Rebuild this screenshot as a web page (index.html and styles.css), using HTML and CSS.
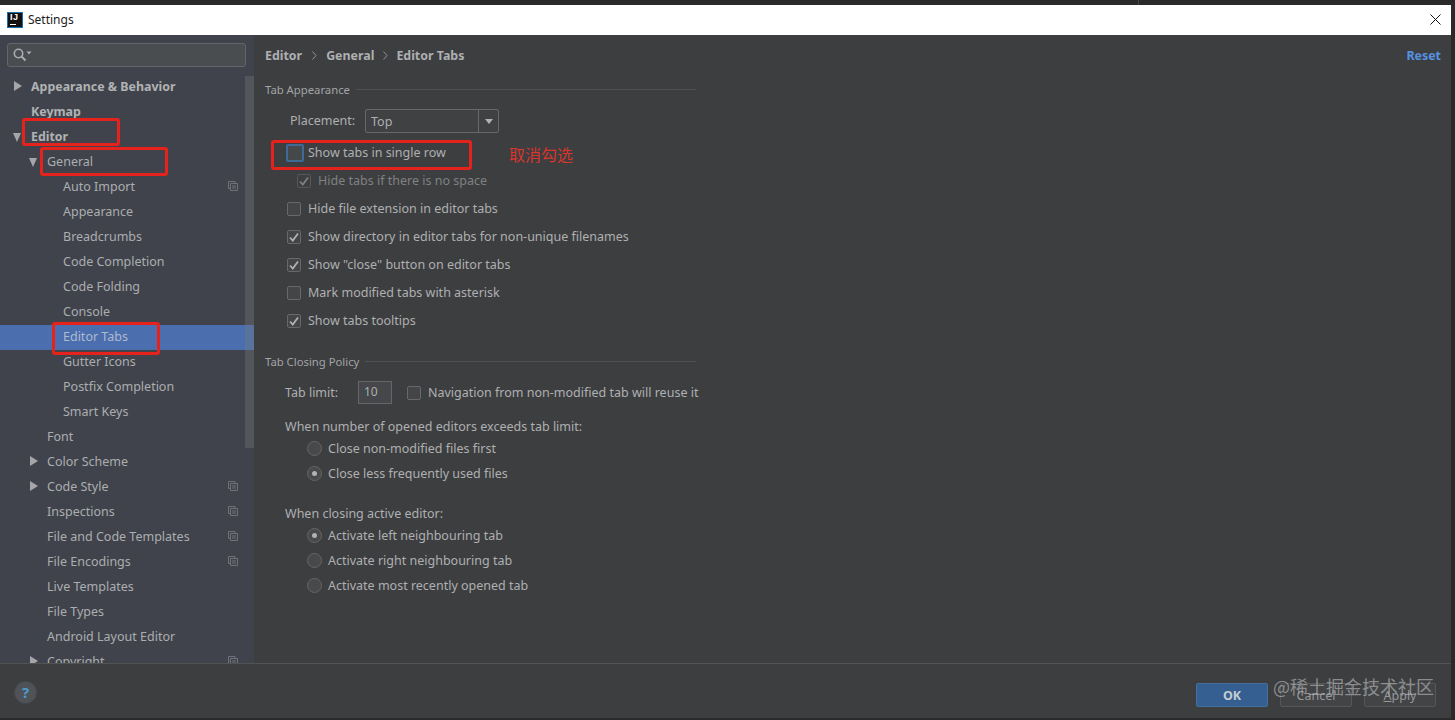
FILE: index.html
```html
<!DOCTYPE html>
<html lang="en">
<head>
<meta charset="utf-8">
<title>Settings</title>
<link rel="stylesheet" href="styles.css">
</head>
<body>
<svg class="defs" width="0" height="0" aria-hidden="true">
  <symbol id="copy" viewBox="0 0 10 10"><path d="M0.5 0.5H7V2.5M0.5 0.5V7.5H2.5M2.5 2.5H9.5V9.5H2.5ZM4 5H8M4 7H8" fill="none" stroke="#6f7378" stroke-width="1"/></symbol>
  <symbol id="check" viewBox="0 0 14 14"><path d="M3 7.5L5.8 10.5L11 3.5" fill="none" stroke="currentColor" stroke-width="1.8"/></symbol>
  <symbol id="chev" viewBox="0 0 5 9"><path d="M0.5 0.5L4 4.5L0.5 8.5" fill="none" stroke="#8f9193" stroke-width="1"/></symbol>
</svg>
<i class="top-line"></i>
<div class="window">
  <header class="titlebar">
    <div class="logo"><span class="logo-text">IJ</span><span class="logo-bar"></span></div>
    <span class="title">Settings</span>
    <svg class="close" width="11" height="11" viewBox="0 0 11 11"><path d="M0.5 0.5L10.5 10.5M10.5 0.5L0.5 10.5" stroke="#111" stroke-width="1" fill="none"/></svg>
  </header>
  <div class="main">
    <aside class="sidebar">
      <div class="search">
        <svg width="20" height="14" viewBox="0 0 20 14"><circle cx="5.5" cy="5.5" r="4.2" fill="none" stroke="#a9adb2" stroke-width="1.6"/><path d="M8.5 8.5L12.5 12.5" stroke="#a9adb2" stroke-width="2"/><path d="M13.5 3.5H18.5L16 6.5Z" fill="#a9adb2"/></svg>
      </div>
      <div class="tree">
        <div class="node lvl0 strong"><span class="arrow right"></span>Appearance &amp; Behavior</div>
        <div class="node lvl0 strong">Keymap</div>
        <div class="node lvl0 strong"><span class="arrow down"></span>Editor</div>
        <div class="node lvl1"><span class="arrow down"></span>General</div>
        <div class="node lvl2">Auto Import<svg class="copy"><use href="#copy"/></svg></div>
        <div class="node lvl2">Appearance</div>
        <div class="node lvl2">Breadcrumbs</div>
        <div class="node lvl2">Code Completion</div>
        <div class="node lvl2">Code Folding</div>
        <div class="node lvl2">Console</div>
        <div class="node lvl2 selected">Editor Tabs</div>
        <div class="node lvl2">Gutter Icons</div>
        <div class="node lvl2">Postfix Completion</div>
        <div class="node lvl2">Smart Keys</div>
        <div class="node lvl1">Font</div>
        <div class="node lvl1"><span class="arrow right"></span>Color Scheme</div>
        <div class="node lvl1"><span class="arrow right"></span>Code Style<svg class="copy"><use href="#copy"/></svg></div>
        <div class="node lvl1">Inspections<svg class="copy"><use href="#copy"/></svg></div>
        <div class="node lvl1">File and Code Templates<svg class="copy"><use href="#copy"/></svg></div>
        <div class="node lvl1">File Encodings<svg class="copy"><use href="#copy"/></svg></div>
        <div class="node lvl1">Live Templates</div>
        <div class="node lvl1">File Types</div>
        <div class="node lvl1">Android Layout Editor</div>
        <div class="node lvl1"><span class="arrow right"></span>Copyright<svg class="copy"><use href="#copy"/></svg></div>
      </div>
      <div class="scrollbar"></div>
    </aside>
    <main class="content">
      <div class="crumbs">
        <span>Editor</span><svg class="sep"><use href="#chev"/></svg><span>General</span><svg class="sep sep-two"><use href="#chev"/></svg><span>Editor Tabs</span>
        <a class="reset">Reset</a>
      </div>
      <div class="section first"><span>Tab Appearance</span><i class="rule"></i></div>
      <div class="row placement">
        <span class="placement-label">Placement:</span>
        <div class="combo"><span class="combo-value">Top</span><span class="combo-btn"><i></i></span></div>
      </div>
      <div class="row check first-check"><span class="box focus"></span>Show tabs in single row</div>
      <div class="row check sub muted"><span class="box on dim"><svg width="14" height="14"><use href="#check"/></svg></span>Hide tabs if there is no space</div>
      <div class="row check"><span class="box"></span>Hide file extension in editor tabs</div>
      <div class="row check"><span class="box on"><svg width="14" height="14"><use href="#check"/></svg></span>Show directory in editor tabs for non-unique filenames</div>
      <div class="row check"><span class="box on"><svg width="14" height="14"><use href="#check"/></svg></span>Show "close" button on editor tabs</div>
      <div class="row check"><span class="box"></span>Mark modified tabs with asterisk</div>
      <div class="row check"><span class="box on"><svg width="14" height="14"><use href="#check"/></svg></span>Show tabs tooltips</div>
      <div class="section second"><span>Tab Closing Policy</span><i class="rule"></i></div>
      <div class="row limit">
        <span class="limit-label">Tab limit:</span>
        <span class="field">10</span>
        <span class="box"></span>
        <span class="limit-text">Navigation from non-modified tab will reuse it</span>
      </div>
      <div class="row label one">When number of opened editors exceeds tab limit:</div>
      <div class="row radio"><span class="dot"></span>Close non-modified files first</div>
      <div class="row radio"><span class="dot on"></span>Close less frequently used files</div>
      <div class="row label two">When closing active editor:</div>
      <div class="row radio"><span class="dot on"></span>Activate left neighbouring tab</div>
      <div class="row radio"><span class="dot"></span>Activate right neighbouring tab</div>
      <div class="row radio"><span class="dot"></span>Activate most recently opened tab</div>
    </main>
  </div>
  <footer class="footer">
    <span class="help">?</span>
    <div class="buttons">
      <button class="btn primary">OK</button>
      <button class="btn">Cancel</button>
      <button class="btn"><u>A</u>pply</button>
    </div>
  </footer>
</div>
<div class="mark m-editor"></div>
<div class="mark m-general"></div>
<div class="mark m-tabs"></div>
<div class="mark m-show"></div>
<div class="note">取消勾选</div>
<div class="watermark">@稀土掘金技术社区</div>
</body>
</html>
```

FILE: styles.css
```css
* { box-sizing: border-box; }
html, body { margin: 0; height: 720px; overflow: hidden; }
body {
  position: relative;
  background: #2a2a2a;
  padding-top: 5px;
  font-family: "Noto Sans", "Liberation Sans", sans-serif;
  font-size: 12.5px;
  color: #aeb0b1;
}
.defs { position: absolute; }
.top-line { position: absolute; left: 1138px; top: 0; width: 1px; height: 5px; background: #444; }
.window { width: 1451px; height: 713px; display: flex; flex-direction: column; background: #3d3e40; }

.titlebar { height: 30px; flex: none; background: #fff; display: flex; align-items: center; padding: 0 10px 1px 7px; color: #222; }
.logo { width: 16px; height: 16px; margin-top: 1px; background: #111; border: 1px solid #1f6fa8; position: relative; flex: none; margin-right: 5px; }
.logo-text { position: absolute; left: 2px; top: -2px; font: bold 9px/12px "Liberation Sans", sans-serif; letter-spacing: .5px; color: #fff; }
.logo-bar { position: absolute; left: 2px; bottom: 2px; width: 6px; height: 1px; background: #fff; }
.title { font-size: 12px; flex: 1; }
.close { flex: none; }

.main { flex: 1; display: flex; min-height: 0; }
.sidebar { width: 254px; flex: none; background: #40434b; position: relative; overflow: hidden; padding-top: 8px; }
.search { width: 239px; height: 24px; margin-left: 7px; background: #4a4d50; border: 1px solid #63666a; border-radius: 3px; display: flex; align-items: center; padding-left: 5px; }
.tree { margin-top: 8px; }
.node { height: 25px; line-height: 23px; position: relative; white-space: nowrap; color: #abaeb0; }
.lvl0 { padding-left: 31px; }
.lvl1 { padding-left: 47px; }
.lvl2 { padding-left: 63px; }
.strong { font-weight: 700; font-size: 12.4px; color: #b0b2b4; }
.selected { background: #4b6eaf; color: #aebace; }
.arrow { position: absolute; top: 6px; width: 0; height: 0; }
.arrow.right { border-left: 8px solid #a4a6a9; border-top: 5px solid transparent; border-bottom: 5px solid transparent; }
.arrow.down { top: 8px; border-top: 9px solid #a4a6a9; border-left: 4.5px solid transparent; border-right: 4.5px solid transparent; }
.lvl0 .arrow { left: 14px; }
.lvl0 .arrow.down { left: 13px; }
.lvl1 .arrow { left: 30px; }
.lvl1 .arrow.down { left: 29px; }
.copy { position: absolute; left: 228px; top: 6px; width: 10px; height: 10px; }
.scrollbar { position: absolute; left: 245px; top: 41px; width: 9px; height: 372px; background: rgba(120,122,125,.35); }

.content { flex: 1; padding-left: 11px; min-width: 0; }
.crumbs { height: 40px; display: flex; align-items: center; font-weight: 700; font-size: 12.4px; color: #aeb0b2; padding-right: 10px; }
.sep { width: 5px; height: 9px; margin: 1px 9px 0 10px; flex: none; }
.sep-two { margin-right: 8px; margin-left: 9px; }
.reset { margin-left: auto; color: #5592e0; }

.section { width: 431px; height: 20px; padding-bottom: 2px; display: flex; align-items: center; gap: 6px; font-size: 11.3px; color: #a2a4a6; }
.section.first { margin-top: 5px; }
.section.second { margin-top: 17px; }
.rule { flex: 1; height: 1px; background: #4f5153; }

.row { display: flex; align-items: center; white-space: nowrap; }
.placement { height: 24px; margin-top: 9px; padding-left: 25px; }
.placement-label { width: 75px; padding-bottom: 2px; }
.combo { width: 134px; height: 24px; border: 1px solid #66686a; border-radius: 2px; display: flex; background: #3f4143; }
.combo-value { flex: 1; padding-left: 5px; line-height: 24px; }
.combo-btn { width: 20px; border-left: 1px solid #66686a; display: flex; align-items: center; justify-content: center; }
.combo-btn i { width: 0; height: 0; border-top: 5px solid #b0b2b3; border-left: 4px solid transparent; border-right: 4px solid transparent; }

.check { height: 28px; padding: 0 0 1px 22px; gap: 7px; }
.first-check { margin-top: 6px; }
.sub { padding-left: 32px; gap: 7px; }
.muted { color: #7f8183; }
.box { width: 14px; height: 14px; flex: none; border: 1px solid #66686a; border-radius: 2px; background: #434547; color: #b0b2b3; display: block; }
.box svg { display: block; margin: -1px; }
.box.focus { width: 18px; height: 18px; margin: 0 -3px 0 -1px; border: 2px solid #3e6a98; background: #45484b; }
.box.dim { color: #7d7f81; border-color: #565759; background: none; }

.limit { height: 23px; margin-top: 9px; padding-left: 20px; align-items: flex-start; line-height: 23px; }
.limit-label { width: 73px; }
.field { width: 34px; height: 23px; border: 1px solid #646668; background: #45474a; padding-left: 5px; line-height: 20px; font-size: 12px; }
.limit .box { margin: 5px 7px 0 15px; }

.label { height: 20px; padding-left: 20px; }
.label.one { margin-top: 12px; }
.label.two { margin-top: 17px; }
.radio { height: 25px; padding: 0 0 1px 42px; gap: 6px; }
.dot { width: 15px; height: 15px; flex: none; border: 1px solid #636567; border-radius: 50%; background: #47494b; display: flex; align-items: center; justify-content: center; }
.dot.on::after { content: ""; width: 5px; height: 5px; border-radius: 50%; background: #b0b2b3; }

.footer { height: 55px; flex: none; border-top: 1px solid #515355; display: flex; align-items: flex-start; padding: 19px 15px 0 14px; justify-content: space-between; }
.help { width: 23px; height: 23px; margin-top: -2px; border-radius: 50%; background: #4f5357; border: 1px solid #47494d; color: #4a9bd1; font-weight: 700; font-size: 15px; line-height: 21px; text-align: center; }
.buttons { display: flex; gap: 12px; }
.btn { width: 72px; height: 24px; padding: 0; border: 1px solid #55575a; border-radius: 2px; background: #424446; color: #96989a; font: 12.5px "Noto Sans", sans-serif; }
.btn.primary { background: #365f91; border-color: #43709f; color: #c4ccd4; font-weight: 700; }

.mark { position: absolute; border: 3px solid #e5221c; border-radius: 3px; }
.m-editor { left: 22px; top: 118px; width: 98px; height: 28px; }
.m-general { left: 40px; top: 147px; width: 128px; height: 29px; }
.m-tabs { left: 52px; top: 322px; width: 108px; height: 33px; }
.m-show { left: 271px; top: 140px; width: 201px; height: 30px; }
.note { position: absolute; left: 509px; top: 143px; font: 16px/22px "Noto Sans CJK SC", sans-serif; color: #d9352c; }
.watermark { position: absolute; left: 1273px; top: 673px; font: 18px/26px "Noto Sans CJK SC", sans-serif; color: rgba(190,192,194,.6); }
```
